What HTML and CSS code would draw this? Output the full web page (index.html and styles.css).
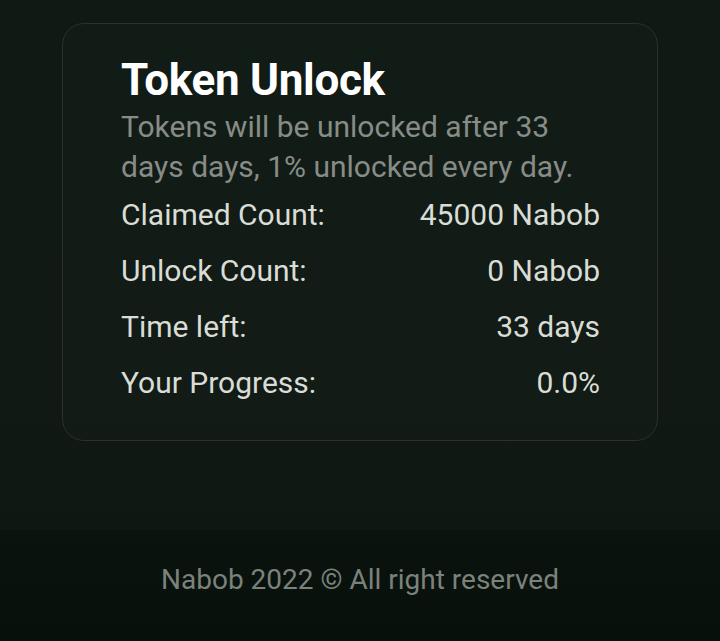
FILE: index.html
```html
<!DOCTYPE html>
<html lang="en">
<head>
    <meta charset="UTF-8">
    <meta name="viewport" content="width=device-width, initial-scale=1.0">
    <title>Token Unlock</title>
    <link rel="stylesheet" href="styles.css">
</head>
<body>

    <main class="page">
        <div class="unlock_card">
            <h1>Token Unlock</h1>
            <p class="unlock_desc">Tokens will be unlocked after 33 days days, 1% unlocked every day.</p>

            <div class="unlock_row">
                <span>Claimed Count:</span>
                <span>45000 Nabob</span>
            </div>
            <div class="unlock_row">
                <span>Unlock Count:</span>
                <span>0 Nabob</span>
            </div>
            <div class="unlock_row">
                <span>Time left:</span>
                <span>33 days</span>
            </div>
            <div class="unlock_row">
                <span>Your Progress:</span>
                <span>0.0%</span>
            </div>
        </div>
    </main>

    <footer class="footer">
        Nabob 2022 &copy; All right reserved
    </footer>

</body>
</html>
```

FILE: styles.css
```css
body {
    font-family: 'Roboto', 'Liberation Sans', sans-serif;
    background: linear-gradient(180deg, #101a14 0%, #101913 60%, #0d1610 100%);
    margin: 0;
    padding: 0;
    height: 641px;
    display: flex;
    flex-direction: column;
    overflow: hidden;
}

.page {
    flex: 1;
    padding: 23px 62px 0 62px;
}

.unlock_card {
    box-sizing: border-box;
    width: 596px;
    height: 418px;
    padding: 32px 57px 0 58px;
    border: 1px solid #2c312c;
    border-radius: 22px;
    background-color: rgba(255, 255, 255, 0.012);
}

h1 {
    margin: 0;
    color: #ffffff;
    font-size: 44px;
    font-weight: 700;
    line-height: 48px;
    letter-spacing: -0.3px;
}

.unlock_desc {
    margin: 3px 0 0 0;
    color: #878c86;
    font-size: 30px;
    line-height: 40px;
}

.unlock_row {
    display: flex;
    justify-content: space-between;
    color: #d9ddd6;
    font-size: 30px;
    line-height: 56px;
}

.footer {
    height: 111px;
    background: linear-gradient(180deg, #0a130d 0%, #07100a 100%);
    color: #7b827c;
    font-size: 28px;
    line-height: 33px;
    text-align: center;
    padding-top: 33px;
    box-sizing: border-box;
}
```
